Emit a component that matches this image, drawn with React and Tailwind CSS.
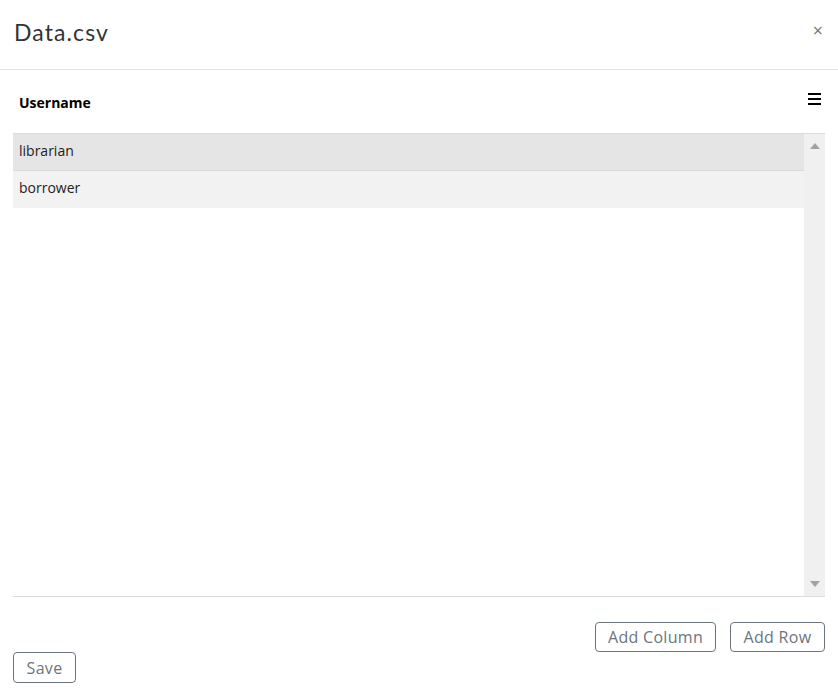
export default function App() {
  return (
    <div className="w-[838px] h-[697px] bg-white flex flex-col" style={{ fontFamily: '"Open Sans", "Noto Sans", sans-serif' }}>
      <div className="h-[70px] border-b border-[#e3e3e3] flex items-center justify-between pl-[14px] pr-[14px] shrink-0">
        <div className="text-[23px] text-[#333] tracking-[1.1px] pb-[4px]" style={{ fontFamily: 'Lato, "Noto Sans", sans-serif', fontWeight: 400 }}>Data.csv</div>
        <div className="text-[#777] text-[18px] leading-none pb-[10px] pr-[1px]">×</div>
      </div>
      <div className="px-[13px] flex flex-col">
        <div className="h-[63px] flex items-center justify-between pl-[6px] pr-[4px]">
          <div className="text-[14px] font-bold text-black pt-[2px]" style={{ fontFamily: '"Open Sans", sans-serif' }}>Username</div>
          <div className="flex flex-col gap-[3px] w-[13px] mb-[5px]">
            <div className="h-[2px] bg-black" />
            <div className="h-[2px] bg-black" />
            <div className="h-[2px] bg-black" />
          </div>
        </div>
        <div className="h-[464px] flex border-t border-b border-[#dcdcdc]">
          <div className="flex-1 flex flex-col">
            <div className="h-[37px] bg-[#e5e5e5] border-b border-[#d9d9d9] flex items-center pl-[6px] pb-[3px] text-[14px] text-[#222]">librarian</div>
            <div className="h-[37px] bg-[#f2f2f2] flex items-center pl-[6px] pb-[4px] text-[14px] text-[#222]">borrower</div>
          </div>
          <div className="w-[21px] bg-[#f0f0f0] flex flex-col justify-between items-center py-[9px]">
            <svg width="10" height="6" viewBox="0 0 10 6"><polygon points="5,0 10,6 0,6" fill="#a3a3a3" /></svg>
            <svg width="10" height="6" viewBox="0 0 10 6"><polygon points="0,0 10,0 5,6" fill="#a3a3a3" /></svg>
          </div>
        </div>
        <div className="flex justify-end gap-[14px] mt-[25px]">
          <button className="h-[30px] w-[121px] border border-[#6c757d] rounded-[4px] text-[#6c757d] text-[16px] leading-none tracking-[0.3px]">Add Column</button>
          <button className="h-[30px] w-[95px] border border-[#6c757d] rounded-[4px] text-[#6c757d] text-[16px] leading-none tracking-[0.3px]">Add Row</button>
        </div>
        <div className="flex">
          <button className="h-[31px] w-[63px] border border-[#6c757d] rounded-[4px] text-[#6c757d] text-[16px] leading-none tracking-[0.3px]">Save</button>
        </div>
      </div>
    </div>
  );
}
